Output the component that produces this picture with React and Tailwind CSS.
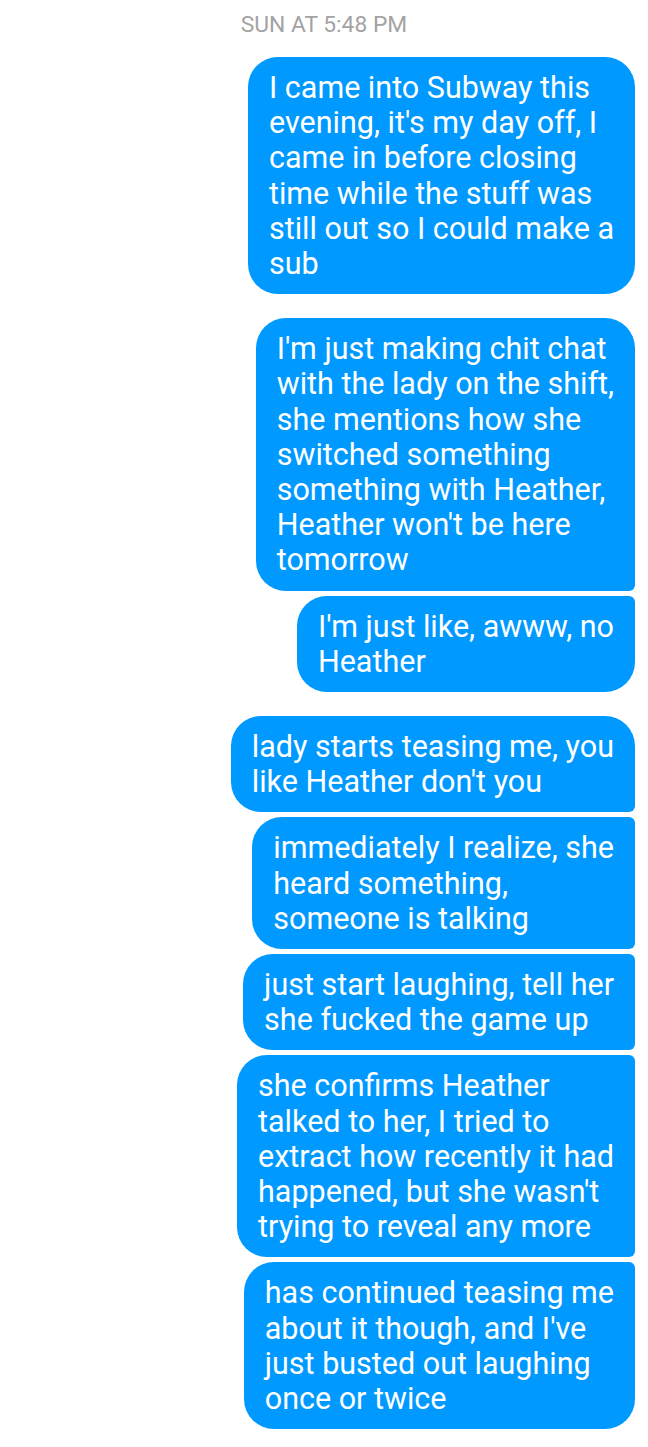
const groups = [
  [
    ["I came into Subway this", "evening, it's my day off, I", "came in before closing", "time while the stuff was", "still out so I could make a", "sub"],
  ],
  [
    ["I'm just making chit chat", "with the lady on the shift,", "she mentions how she", "switched something", "something with Heather,", "Heather won't be here", "tomorrow"],
    ["I'm just like, awww, no", "Heather"],
  ],
  [
    ["lady starts teasing me, you", "like Heather don't you"],
    ["immediately I realize, she", "heard something,", "someone is talking"],
    ["just start laughing, tell her", "she fucked the game up"],
    ["she confirms Heather", "talked to her, I tried to", "extract how recently it had", "happened, but she wasn't", "trying to reveal any more"],
    ["has continued teasing me", "about it though, and I've", "just busted out laughing", "once or twice"],
  ],
];

function Bubble({ lines, first, last }) {
  const tr = first ? "rounded-tr-[30px]" : "rounded-tr-[6px]";
  const br = last ? "rounded-br-[30px]" : "rounded-br-[6px]";
  return (
    <div
      className={`bg-[#0099ff] text-white rounded-tl-[30px] rounded-bl-[30px] ${tr} ${br} px-[21px] py-[13px] text-[30.5px] leading-[35.2px] whitespace-nowrap`}
    >
      {lines.map((l, i) => (
        <div key={i}>{l}</div>
      ))}
    </div>
  );
}

export default function App() {
  return (
    <div
      className="min-h-[1447px] bg-white pb-4"
      style={{ fontFamily: "Roboto, 'Liberation Sans', sans-serif" }}
    >
      <div className="pt-[11px] text-center text-[22.8px] leading-[27px] text-[#a3a3a3]">
        SUN AT 5:48 PM
      </div>

      <div className="mt-[19px] flex flex-col items-end gap-[24px] pr-[13px]">
        {groups.map((g, gi) => (
          <div key={gi} className="flex flex-col items-end gap-[5px]">
            {g.map((lines, i) => (
              <Bubble
                key={i}
                lines={lines}
                first={i === 0}
                last={i === g.length - 1}
              />
            ))}
          </div>
        ))}
      </div>
    </div>
  );
}
